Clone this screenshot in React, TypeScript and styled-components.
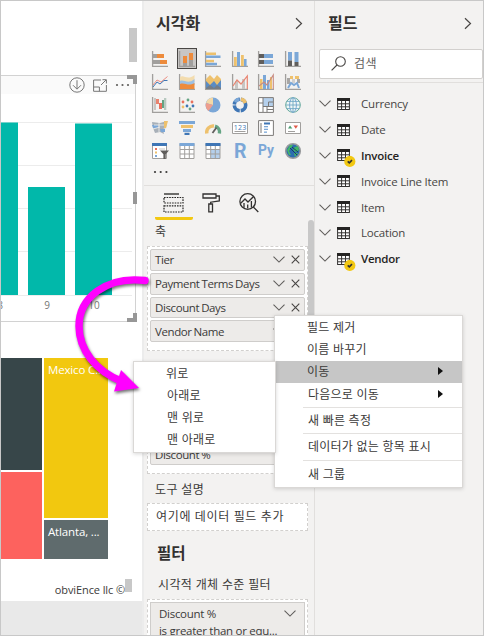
import React from "react";
import styled, { createGlobalStyle, css } from "styled-components";

const GlobalStyle = createGlobalStyle`
  * { box-sizing: border-box; }
  body {
    margin: 0;
    background: #fff;
    color: #3b3a39;
    font-family: "Open Sans", "Noto Sans CJK KR", sans-serif;
    font-size: 12px;
  }
  svg { display: block; flex: none; }
`;

const Frame = styled.main`
  position: relative;
  display: flex;
  width: 484px;
  height: 636px;
  border: 1px solid #c8c8c8;
  overflow: hidden;
`;

/* Report canvas */

const Canvas = styled.section`
  display: flex;
  flex-direction: column;
  width: 143px;
  background: #fff;
  border-right: 2px solid #ececec;
`;

const CanvasTop = styled.div`
  display: flex;
  justify-content: flex-end;
  height: 74px;
  padding: 27px 5px 0 0;
`;

const ScrollThumb = styled.span<{ $w: number; $h: number }>`
  width: ${(p) => p.$w}px;
  height: ${(p) => p.$h}px;
  background: #c8c8c8;
`;

const ChartVisual = styled.div`
  position: relative;
  width: 135px;
  height: 247px;
  border: solid #d2d2d2;
  border-width: 1px 1px 1px 0;
`;

const VisualHeader = styled.div`
  display: flex;
  align-items: center;
  justify-content: flex-end;
  gap: 8px;
  height: 18px;
  padding-right: 5px;
  background: #fafafa;
`;

const Handle = styled.i<{ $pos: "top" | "middle" | "bottom" }>`
  position: absolute;
  right: -2px;
  border: 0 solid #979797;
  ${(p) =>
    p.$pos === "middle"
      ? css`top: 116px; width: 4px; height: 12px; background: #979797;`
      : p.$pos === "top"
      ? css`top: -1px; width: 10px; height: 9px; border-width: 4px 4px 0 0;`
      : css`bottom: -1px; width: 10px; height: 9px; border-width: 0 4px 4px 0;`}
`;

const Treemap = styled.div`
  display: grid;
  grid-template-columns: 41px 64px;
  column-gap: 2px;
  height: 201px;
  margin-top: 36px;
`;

const TreeColumn = styled.div`
  display: flex;
  flex-direction: column;
  gap: 2px;
`;

const Tile = styled.div<{ $bg: string; $h: number }>`
  height: ${(p) => p.$h}px;
  padding: 4px 0 0 4px;
  background: ${(p) => p.$bg};
  color: #fff;
  line-height: 16px;
  font-size: 11.5px;
  letter-spacing: -0.15px;
  white-space: nowrap;
`;

const Credit = styled.div`
  display: flex;
  justify-content: flex-end;
  height: 42px;
  padding: 20px 10px 0 0;
  font-size: 11px;
  line-height: 22px;
  letter-spacing: -0.1px;
  white-space: nowrap;
`;

const CanvasFooter = styled.div`
  flex: 1;
  background: #e9e9e9;
`;

/* Panes */

const Pane = styled.section<{ $w: number }>`
  display: flex;
  flex-direction: column;
  width: ${(p) => p.$w}px;
  background: #f3f2f1;
`;

const VisualPane = styled(Pane)`
  border-right: 1px solid #e1dfdd;
`;

const PaneHeader = styled.header<{ $left: number }>`
  display: flex;
  align-items: center;
  justify-content: space-between;
  height: 45px;
  padding: 0 11px 1px ${(p) => p.$left}px;
`;

const Title = styled.h2<{ $size: number }>`
  margin: 0;
  font-size: ${(p) => p.$size}px;
  font-weight: 700;
  line-height: 24px;
  color: #323130;
`;

const Gallery = styled.div`
  display: grid;
  grid-template-columns: repeat(6, 26.6px);
  grid-auto-rows: 23px;
  height: 117px;
  padding: 2px 0 0 2px;
`;

const Cell = styled.span<{ $on?: boolean }>`
  display: flex;
  align-items: center;
  justify-content: center;
  width: 20px;
  height: 21px;
  margin-left: 4px;
  border: 1.5px solid ${(p) => (p.$on ? "#484644" : "transparent")};
  background: ${(p) => (p.$on ? "#c8c6c4" : "transparent")};
`;

const More = styled.div`
  height: 23px;
  padding: 7px 0 0 9px;
  border-bottom: 1px solid #e1dfdd;
`;

const Tabs = styled.div`
  display: flex;
  height: 34px;
  padding-left: 11px;
`;

const Tab = styled.span<{ $active?: boolean }>`
  display: flex;
  justify-content: center;
  width: 38px;
  padding: 7px 2px 0 0;
  border-bottom: 3.5px solid ${(p) => (p.$active ? "#f2c811" : "transparent")};
  border-radius: 2px;
`;

const Wells = styled.div`
  display: flex;
  flex: 1;
  min-height: 0;
`;

const WellColumn = styled.div`
  display: flex;
  flex-direction: column;
  width: 164px;
  padding-left: 3px;
`;

const WellScroll = styled.div`
  width: 6px;
  height: 164px;
  border-radius: 3px;
  background: #c8c8c8;
`;

const WellLabel = styled.div<{ $h: number; $gap?: number }>`
  flex: none;
  height: ${(p) => p.$h}px;
  padding: ${(p) => p.$gap ?? 0}px 0 0 8px;
  line-height: 20px;
  letter-spacing: 0.35px;
  white-space: nowrap;
`;

const Well = styled.div<{ $h: number; $above?: number; $end?: boolean }>`
  display: flex;
  flex: none;
  flex-direction: column;
  justify-content: ${(p) => (p.$end ? "flex-end" : "flex-start")};
  gap: 2px;
  height: ${(p) => p.$h}px;
  margin-top: ${(p) => p.$above ?? 0}px;
  padding: 2px 2px ${(p) => (p.$end ? 8 : 2)}px;
  border: 1.5px dashed #d2d0ce;
  background: #fff;
`;

const Chip = styled.div`
  display: flex;
  align-items: center;
  justify-content: space-between;
  flex: none;
  height: 21.8px;
  padding: 0 4px;
  border: 1px solid #cfcdcb;
  border-radius: 2px;
  background: #edebe9;
  font-size: 11.5px;
  letter-spacing: -0.4px;
  word-spacing: -0.6px;
  white-space: nowrap;
`;

const ChipActions = styled.span`
  display: flex;
  align-items: center;
  gap: 6px;
`;

const Placeholder = styled.div`
  padding-left: 6px;
  line-height: 21px;
  letter-spacing: 0.65px;
  white-space: nowrap;
`;

const SectionTitle = styled(Title)`
  flex: none;
  height: 42px;
  padding: 10px 0 0 10px;
`;

const FilterLabel = styled(WellLabel)`
  padding-left: 11px;
`;

const FilterCard = styled.div`
  padding: 1px 8px;
  height: 50px;
  border: 1px solid #cfcdcb;
  background: #edebe9;
  font-size: 11.5px;
  line-height: 17px;
  letter-spacing: -0.28px;
  white-space: nowrap;
`;

const FilterHead = styled.div`
  display: flex;
  align-items: center;
  justify-content: space-between;
  height: 18px;
`;

/* Fields pane */

const SearchArea = styled.div`
  height: 37px;
  padding: 3px 0 0 4px;
  border-bottom: 1px solid #e1dfdd;
`;

const SearchBox = styled.div`
  display: flex;
  align-items: center;
  gap: 8px;
  height: 30px;
  padding: 0 0 2px 11px;
  border: 1px solid #d2d0ce;
  border-radius: 2px;
  background: #fff;
  color: #605e5c;
  letter-spacing: 0.5px;
`;

const FieldList = styled.div`
  display: grid;
  grid-auto-rows: 25.8px;
  padding-top: 8px;
`;

const FieldRow = styled.div<{ $bold?: boolean }>`
  display: grid;
  grid-template-columns: 18px 24px 1fr;
  align-items: center;
  padding-left: 4px;
  font-size: 11.5px;
  font-weight: ${(p) => (p.$bold ? 600 : 400)};
  color: ${(p) => (p.$bold ? "#252423" : "#484644")};
  letter-spacing: ${(p) => (p.$bold ? -0.25 : -0.2)}px;
  white-space: nowrap;
`;

/* Menus */

const Menu = styled.div<{ $x: number; $y: number; $w: number; $h: number }>`
  position: absolute;
  left: ${(p) => p.$x}px;
  top: ${(p) => p.$y}px;
  width: ${(p) => p.$w}px;
  height: ${(p) => p.$h}px;
  border: 1px solid #dad8d6;
  background: #fff;
  box-shadow: 0 1px 4px rgba(0, 0, 0, 0.16);
`;

const MenuItem = styled.div<{ $h: number; $left: number; $on?: boolean }>`
  display: flex;
  align-items: center;
  justify-content: space-between;
  height: ${(p) => p.$h}px;
  padding: 0 19px 1px ${(p) => p.$left}px;
  background: ${(p) => (p.$on ? "#c6c6c6" : "transparent")};
  letter-spacing: 0.25px;
  white-space: nowrap;
`;

const Divider = styled.div`
  height: 1px;
  margin-left: 28px;
  background: #e3e1df;
`;

const ArrowLayer = styled.svg`
  position: absolute;
  left: -1px;
  top: -1px;
  pointer-events: none;
`;

const O = "#ed8b3c";
const G = "#a19f9d";
const B = "#7ba7d7";
const Y = "#eec16d";
const D = "#3f76b5";
const K = "#605e5c";

const R = (x: number, y: number, w: number, h: number, f: string) => (
  <rect key={`${x}-${y}-${w}-${h}`} x={x} y={y} width={w} height={h} fill={f} />
);
const L = (d: string, s: string, w = 1) => (
  <path key={d} d={d} fill="none" stroke={s} strokeWidth={w} />
);
const axis = L("M.6 0V15.4H16", G, 1.3);

const glyphs: React.ReactNode[] = [
  <>{axis}{R(1, 3, 4, 4, G)}{R(5, 3, 7, 4, O)}{R(1, 9, 7, 4, G)}{R(8, 9, 7, 4, O)}</>,
  <>{axis}{R(4, 5, 4, 7, O)}{R(4, 12, 4, 3, G)}{R(10, 2, 4, 7, O)}{R(10, 9, 4, 6, G)}</>,
  <>{axis}{R(1, 1.5, 10, 2.5, Y)}{R(1, 4.5, 14.5, 2.5, B)}{R(1, 8.8, 8, 2.5, Y)}{R(1, 11.8, 11, 2.5, B)}</>,
  <>{axis}{R(2, 6, 2.8, 9, Y)}{R(5, 1, 3, 14, B)}{R(9, 4, 2.8, 11, Y)}{R(12, 8, 2.6, 7, B)}</>,
  <>{axis}{R(1, 3, 5, 4, K)}{R(6, 3, 9, 4, B)}{R(1, 9, 5, 4, K)}{R(6, 9, 9, 4, B)}</>,
  <>{axis}{R(3, 1, 4, 8.5, B)}{R(3, 9.5, 4, 5.5, K)}{R(9.5, 1, 4, 10, B)}{R(9.5, 11, 4, 4, K)}</>,
  <>{axis}{L("M1 11L5 6L9 8L15.5 2.5", "#ec8f83")}{L("M1 13L5 8L8 10L12 6.5H15.5", D)}</>,
  <>{axis}<path d="M1 3C5 0 8 7 15.5 1V8H1Z" fill="#f3dcae" /><path d="M1 7C5 5 9 11 15.5 5V11H1Z" fill="#9cc0e5" /><path d="M1 10C6 8 9 13 15.5 9V15H1Z" fill={O} /></>,
  <>{axis}<path d="M1 5L5 1L9 5L12 1L16 5V12H1Z" fill={Y} /><path d="M1 7L5 11L9 7L12 11L16 6V15H1Z" fill="#5b8cc3" /><path d="M1 14L5 11L9 14L12 11L16 14V15H1Z" fill="#757d86" /></>,
  <>{axis}{R(3, 7, 3, 8, "#c8c6c4")}{R(10, 5, 3, 10, "#c8c6c4")}{L("M1 12L5 6L9 10L15.3 2V15", "#e98470", 1.2)}</>,
  <>{axis}{R(2, 5, 2.5, 10, Y)}{R(5, 1, 3, 14, B)}{R(9, 6, 2.5, 9, B)}{R(12, 3, 2, 12, Y)}{L("M1 12L6 8L9 11L15.3 1V15", "#c78c83", 1.1)}</>,
  <>{axis}{R(2, 4, 3, 6, "#a8a6a4")}{R(5, 2, 3, 3, Y)}{R(7, 5, 3, 4, "#d2d0ce")}{R(10, 2, 4, 3, Y)}{R(12, 5, 3, 4, "#a8a6a4")}{L("M3 14L6 9L9 11L12 9L14 14", B, 2)}</>,
  <>{axis}{R(2, 1, 2, 12, "#c8c6c4")}{R(4, 2, 3, 5, "#e98470")}{R(7, 6, 3, 6, "#e9705c")}{R(10, 3, 2, 8, "#64a483")}{R(12, 1, 2.3, 12, "#b8c9c0")}</>,
  <>{axis}{[[4, 5, "#e9705c"], [9, 3, "#64a483"], [13, 5, "#e9705c"], [4, 10, Y], [8, 9, D], [14, 9, D], [11, 12, "#64a483"]].map(([x, y, f]) => <circle key={`${x}-${y}`} cx={x} cy={y} r="1.4" fill={f as string} />)}</>,
  <><circle cx="8" cy="8" r="7.5" fill={B} /><path d="M8 8V.5A7.5 7.5 0 0 0 1 6Z" fill="#f3d9a8" /><path d="M8 8L1 6A7.5 7.5 0 0 0 3.5 14Z" fill="#ee9e8d" /></>,
  <><circle cx="8" cy="8" r="5.7" fill="none" stroke={D} strokeWidth="3.6" strokeDasharray="8 1" /><path d="M3 5A6 6 0 0 1 7 2.3" fill="none" stroke={B} strokeWidth="3.6" /><path d="M9 2.3A6 6 0 0 1 13.4 6" fill="none" stroke={Y} strokeWidth="3.6" /></>,
  <>{R(.5, .5, 15, 15, "#fff")}{R(5, 1, 10, 8, "#b5d0ec")}{L("M.6.6H15.4V15.4H.6ZM5 .6V15M5 9.5H15M10.5 5V9.5M.6 6H5M10.5 5H15M9 9.5V15M9 12.5H15", "#7b7977")}</>,
  <><circle cx="8" cy="8" r="7.3" fill="#eef7f5" stroke="#61a69b" /><ellipse cx="8" cy="8" rx="3.4" ry="7.3" fill="none" stroke={B} />{L("M8 .7V15.3M1 8H15M2 4.4H14M2 11.6H14", "#6fa8c4", .9)}</>,
  <><path d="M0 2L8 3L15 1L14 8L11 9L12 14L8 12L3 13L1 8Z" fill="#a8b0b8" /><path d="M0 5H6V8H1ZM8 9H13V12H9Z" fill={B} /><path d="M12 1H16L14 8H12Z" fill={Y} />{L("M1 9L8 7M7 2V12M2 5H12", "#f3f2f1", .8)}</>,
  <>{R(0, 1, 16, 3, B)}{R(2, 5, 12, 3, Y)}{R(4, 9, 8, 3, B)}{R(5.5, 12.8, 5, 2.2, D)}</>,
  <><path d="M1.8 13.5A6.4 6.4 0 0 1 9 6" fill="none" stroke={Y} strokeWidth="3.4" /><path d="M10 6.1A6.4 6.4 0 0 1 14.4 13.5" fill="none" stroke="#64a483" strokeWidth="3.4" />{L("M7.5 13L11.5 7.5", K, 1.8)}</>,
  <>{R(.5, 2.5, 15, 11, "#fff")}{L("M.5 2.5H15.5V13.5H.5Z M2.5 11.5H13.5", G)}<text x="1.7" y="9.7" fontSize="7" fill={D} textLength="12.6">123</text></>,
  <>{R(.5, .5, 15, 15, "#fff")}{L("M.6.6H15.4V15.4H.6ZM3 3V13", "#7b7977")}{R(6, 2.5, 6, 2, D)}{R(6, 6, 4, 1.3, B)}{R(6, 8.7, 4, 1.3, B)}{R(6, 11.5, 3, 1.3, B)}</>,
  <>{R(.5, 2.5, 15, 11, "#fff")}{L("M.5 2.5H15.5V13.5H.5Z M3 11.5H10", G)}<path d="M3 8.5L5 5.5L7.3 8.5Z" fill="#4e9d72" /><path d="M8.5 5.5H13L10.8 8.7Z" fill="#df5a49" /></>,
  <>{R(.5, .5, 14, 15, "#fff")}{L("M.5.5H14.5V15.5H.5Z", G)}{R(0, 0, 15, 3, D)}{R(3, 5, 2, 2, "#e9705c")}{R(3, 8.5, 2, 2, Y)}{R(3, 12, 2, 2, B)}{L("M7 6H13", "#c8c6c4")}<path d="M8 7.5H17L13.7 11.3V16H11.4V11.3Z" fill={K} /></>,
  <>{R(1, .5, 14, 15, "#fff")}{L("M1 .5H15V15.5H1ZM1 6.5H15M1 11H15M5.7 3V15M10.3 3V15", G)}{R(.5, 0, 15, 3, B)}</>,
  <>{R(1, .5, 14, 15, "#fff")}{R(6, 7, 9, 8, "#b5d0ec")}{L("M1 .5H15V15.5H1ZM1 6.5H15M1 11H15M5.7 3V15M10.3 3V15", G)}{R(.5, 0, 15, 3, D)}</>,
  <><text x="2" y="15" fontSize="20" fontWeight="700" fontFamily="Roboto" fill={B} textLength="12.5" lengthAdjust="spacingAndGlyphs">R</text></>,
  <><text x="0" y="12.2" fontSize="15" fontWeight="700" fontFamily="Roboto" fill={B} textLength="16" lengthAdjust="spacingAndGlyphs">Py</text></>,
  <><circle cx="8" cy="8" r="7.3" fill="#2c6db0" stroke="#9a9c9e" strokeWidth="1.6" /><path d="M2 7L5 2L8 2L6 5L4 8L6 12L4 12ZM8 5L13 3L14 7L11 9L9 8ZM9 10L13 10L10 14Z" fill="#43b865" />{L("M5 5L12 12M7 4L13 9", "#173e61", 1)}</>,
];

const Chevron = () => (
  <svg width="12" height="7" viewBox="0 0 12 7" fill="none" stroke="#605e5c" strokeWidth="1.1"><path d="M.5.7L6 6.1L11.5.7" /></svg>
);
const Collapse = () => (
  <svg width="8" height="13" fill="none" stroke="#484644" strokeWidth="1.2"><path d="M1 1.2L6.5 6.5L1 11.8" /></svg>
);
const Close = () => (
  <svg width="9" height="9" stroke="#484644" strokeWidth="1.1"><path d="M.7.7L8.3 8.3M8.3.7L.7 8.3" /></svg>
);
const Dots = ({ gap = 6, r = 0.9, c = "#3b3a39" }: { gap?: number; r?: number; c?: string }) => (
  <svg width={gap * 2 + 4} height="4" fill={c}>{[0, 1, 2].map((i) => <circle key={i} cx={2 + i * gap} cy="2" r={r} />)}</svg>
);

const TableIcon = ({ checked }: { checked?: boolean }) => (
  <svg width="20" height="14" overflow="visible">
    <rect x=".6" y="1.5" width="11.8" height="11" fill="#fff" stroke="#323130" />
    <path d="M0 1H13V4H0Z" fill="#252423" />
    <path d="M1 6.8H12M1 9.8H12M4.6 4V12.5M8.5 4V12.5" stroke="#323130" fill="none" />
    {checked && <><circle cx="12.8" cy="13.4" r="5.6" fill="#f2c811" /><path d="M10.7 13.4L12.3 14.8L15 12.2" fill="none" stroke="#323130" strokeWidth="1.6" /></>}
  </svg>
);

const BarChart = () => (
  <svg width="134" height="227" viewBox="1 94 134 227">
    {[122.5, 165.5, 208.5, 251.5, 295.5].map((y) => <path key={y} d={`M1 ${y}H132`} stroke="#ececec" />)}
    <g fill="#01b8aa">
      <rect x="1" y="122.5" width="17" height="172.5" />
      <rect x="28" y="187" width="37" height="108" />
      <rect x="75" y="123.5" width="37" height="171.5" />
    </g>
    <g fill="#777" fontSize="10" textAnchor="middle">
      <text x="0" y="309">8</text><text x="47" y="309">9</text><text x="94" y="309">10</text>
    </g>
  </svg>
);

const wellItems = ["Tier", "Payment Terms Days", "Discount Days", "Vendor Name"];
const fields: [string, boolean][] = [
  ["Currency", false], ["Date", false], ["Invoice", true], ["Invoice Line Item", false],
  ["Item", false], ["Location", false], ["Vendor", true],
];

const MenuArrow = () => <svg width="5" height="8"><path d="M0 0L5 4L0 8Z" fill="#111" /></svg>;

export default function App() {
  return (
    <>
      <GlobalStyle />
      <Frame>
        <Canvas>
          <CanvasTop><ScrollThumb $w={8} $h={34} /></CanvasTop>
          <ChartVisual>
            <VisualHeader>
              <svg width="16" height="16" fill="none" stroke="#777" strokeWidth="1"><circle cx="8" cy="8" r="7.2" /><path d="M8 3.2V12M4 8.2L8 12.2L12 8.2" /></svg>
              <svg width="14" height="13" fill="none" stroke="#777" strokeWidth="1"><path d="M8 1H.6V12.3H13.4V6M.6 8H6.4V12.3M8 6L13 1M9.5 .7H13.4V4.5" /></svg>
              <Dots gap={5.5} r={1.1} c="#605e5c" />
            </VisualHeader>
            <BarChart />
            <Handle $pos="top" /><Handle $pos="middle" /><Handle $pos="bottom" />
          </ChartVisual>
          <Treemap>
            <TreeColumn><Tile $bg="#374649" $h={112} /><Tile $bg="#fd625e" $h={87} /></TreeColumn>
            <TreeColumn><Tile $bg="#f2c80f" $h={160}>Mexico C...</Tile><Tile $bg="#5f6b6d" $h={39}>Atlanta, ...</Tile></TreeColumn>
          </Treemap>
          <Credit>obviEnce llc ©<ScrollThumb $w={7} $h={13} /></Credit>
          <CanvasFooter />
        </Canvas>

        <VisualPane $w={171}>
          <PaneHeader $left={12}><Title $size={16}>시각화</Title><Collapse /></PaneHeader>
          <Gallery>
            {glyphs.map((g, i) => (
              <Cell key={i} $on={i === 1}><svg width="16" height="16" overflow="visible">{g}</svg></Cell>
            ))}
          </Gallery>
          <More><Dots gap={5.7} r={1.1} /></More>
          <Tabs>
            <Tab $active>
              <svg width="21" height="20" fill="none" stroke="#252423"><path d="M1 1H16" strokeWidth="1.3" /><path d="M1 4.5H20V10H1ZM1 12.8H20V19H1Z" strokeDasharray="1.6 1" strokeWidth="1.2" /></svg>
            </Tab>
            <Tab>
              <svg width="18" height="20" fill="none" stroke="#323130" strokeWidth="1.3"><path d="M1 1H14V5H1ZM14 3H17.3V8L8.7 9.2V11M6.8 11H10.5V18.8H6.8Z" /></svg>
            </Tab>
            <Tab>
              <svg width="20" height="20" fill="none" stroke="#323130" strokeWidth="1.3"><circle cx="8.7" cy="8.5" r="7.8" /><path d="M14.3 14L19.3 19M1.5 10.5L6 6L9 9L14.3 3.7M5 10V14.8M8.7 11.5V15.5M12.4 8V14.5" /></svg>
            </Tab>
          </Tabs>
          <Wells>
            <WellColumn>
              <WellLabel $h={26} $gap={2}>축</WellLabel>
              <Well $h={105}>
                {wellItems.map((name) => (
                  <Chip key={name}>{name}<ChipActions><Chevron /><Close /></ChipActions></Chip>
                ))}
              </Well>
              <Well $h={99} $above={24} $end>
                <Chip>Discount %</Chip>
              </Well>
              <WellLabel $h={29} $gap={6}>도구 설명</WellLabel>
              <Well $h={28}><Placeholder>여기에 데이터 필드 추가</Placeholder></Well>
              <SectionTitle $size={15.5}>필터</SectionTitle>
              <FilterLabel $h={26} $gap={2}>시각적 개체 수준 필터</FilterLabel>
              <Well $h={60}>
                <FilterCard><FilterHead>Discount %<Chevron /></FilterHead>is greater than or equ...</FilterCard>
              </Well>
            </WellColumn>
            <WellScroll />
          </Wells>
        </VisualPane>

        <Pane $w={168}>
          <PaneHeader $left={13}><Title $size={16}>필드</Title><Collapse /></PaneHeader>
          <SearchArea>
            <SearchBox>
              <svg width="15" height="15" fill="none" stroke="#484644" strokeWidth="1.1"><circle cx="9.5" cy="5.5" r="4.8" /><path d="M6 9L.6 14.4" /></svg>
              검색
            </SearchBox>
          </SearchArea>
          <FieldList>
            {fields.map(([name, on]) => (
              <FieldRow key={name} $bold={on}><Chevron /><TableIcon checked={on} />{name}</FieldRow>
            ))}
          </FieldList>
        </Pane>

        <Menu $x={273} $y={314} $w={189} $h={173}>
          <MenuItem $h={22} $left={32}>필드 제거</MenuItem>
          <MenuItem $h={22.5} $left={32}>이름 바꾸기</MenuItem>
          <MenuItem $h={22} $left={32} $on>이동<MenuArrow /></MenuItem>
          <MenuItem $h={24} $left={33}>다음으로 이동<MenuArrow /></MenuItem>
          <Divider />
          <MenuItem $h={25.5} $left={33}>새 빠른 측정</MenuItem>
          <Divider />
          <MenuItem $h={25.5} $left={33}>데이터가 없는 항목 표시</MenuItem>
          <Divider />
          <MenuItem $h={27} $left={33}>새 그룹</MenuItem>
        </Menu>
        <Menu $x={132} $y={360} $w={143} $h={92}>
          <MenuItem $h={22} $left={32}>위로</MenuItem>
          <MenuItem $h={22} $left={33}>아래로</MenuItem>
          <MenuItem $h={22} $left={33}>맨 위로</MenuItem>
          <MenuItem $h={22} $left={33}>맨 아래로</MenuItem>
        </Menu>

        <ArrowLayer width="160" height="400">
          <g style={{ filter: "drop-shadow(1px 2px 1.5px rgba(0,0,0,.55))" }}>
            <path d="M145 280.5C106 276 79 298 79 326C79 350 96 371 121 381" fill="none" stroke="#f0f" strokeWidth="7.4" strokeLinecap="round" />
            <path d="M121 370L139 388L114 391.500Z" fill="#f0f" />
          </g>
        </ArrowLayer>
      </Frame>
    </>
  );
}
